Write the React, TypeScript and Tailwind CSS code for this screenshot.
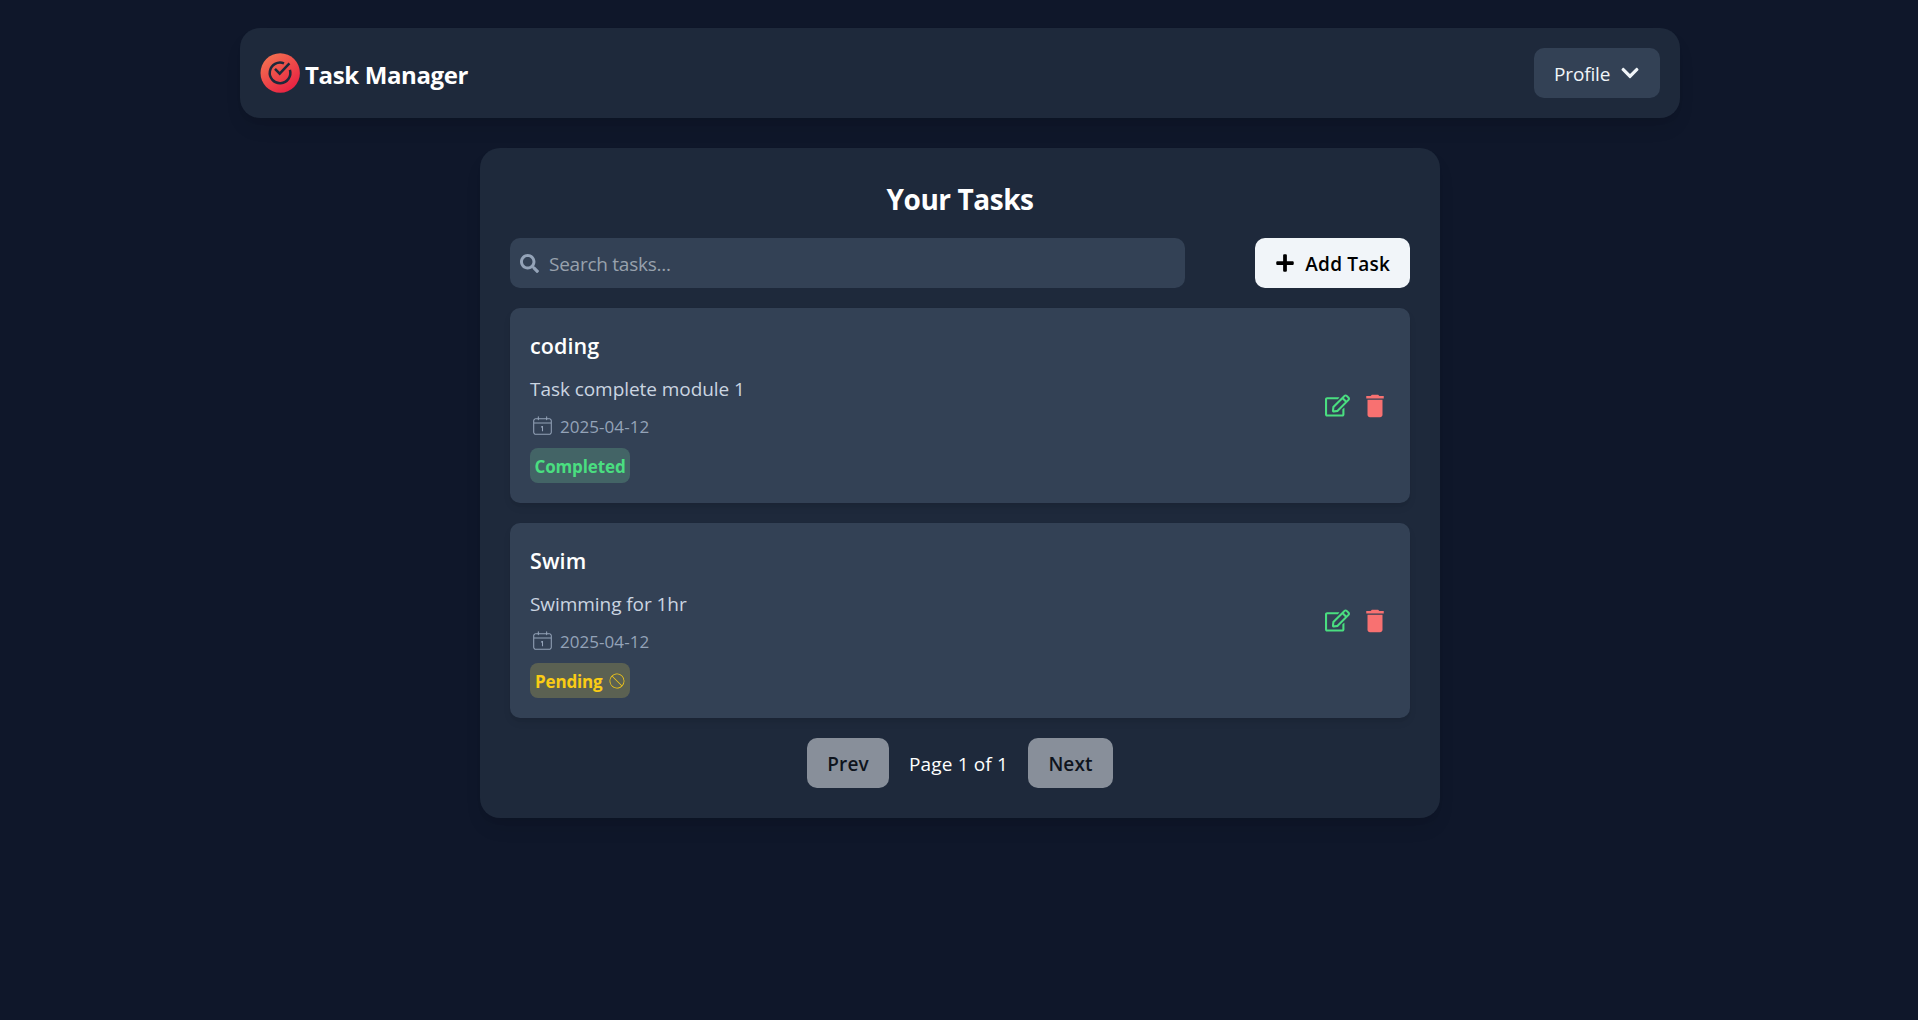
import type { ReactNode } from "react";
import { FaChevronDown, FaPlus, FaRegEdit, FaSearch } from "react-icons/fa";
import { CiCalendarDate, CiNoWaitingSign } from "react-icons/ci";
import { MdDelete } from "react-icons/md";

interface Task {
  title: string;
  description: string;
  date: string;
  completed: boolean;
}

const tasks: Task[] = [
  { title: "coding", description: "Task complete module 1", date: "2025-04-12", completed: true },
  { title: "Swim", description: "Swimming for 1hr", date: "2025-04-12", completed: false },
];

function Logo() {
  return (
    <svg viewBox="0 0 40 40" className="size-10 shrink-0">
      <defs>
        <linearGradient id="logo" x1="0.15" y1="0.1" x2="0.75" y2="0.95">
          <stop offset="0" stopColor="#f36f50" />
          <stop offset="1" stopColor="#e82242" />
        </linearGradient>
      </defs>
      <circle cx="20.2" cy="20" r="19.7" fill="url(#logo)" />
      <g fill="none" stroke="#1e293b" strokeWidth="2.5">
        <path d="M24 10.4A10.3 10.3 0 1 0 29.9 16.9" />
        <path d="M15 15.8l4.7 4.8L29.4 10.4" />
      </g>
    </svg>
  );
}

function Navbar() {
  return (
    <nav className="flex h-[90px] w-[1440px] items-center justify-between rounded-[20px] bg-[#1e293b] px-5 shadow-[0_12px_19px_-4px_rgba(0,0,0,0.1),0_5px_8px_-5px_rgba(0,0,0,0.1)]">
      <div className="flex items-center gap-[5px]">
        <Logo />
        <span className="pt-[3px] text-[24px] leading-[35px] font-bold tracking-[-0.36px]">Task Manager</span>
      </div>
      <button className="flex h-[50px] w-[126px] items-center justify-between rounded-[10px] bg-[#334155] px-5 text-[#f1f5f9]">
        <span className="pt-[2px] text-[19px] leading-[30px] tracking-[-0.15px]">Profile</span>
        <FaChevronDown className="size-5" />
      </button>
    </nav>
  );
}

function PageButton({ children, width }: { children: ReactNode; width: string }) {
  return (
    <button className={`${width} h-[50px] rounded-[10px] bg-[#f1f5f9] pt-[2px] text-[19px] font-semibold tracking-[0.1px] text-black opacity-50`}>
      {children}
    </button>
  );
}

function TaskCard({ task }: { task: Task }) {
  return (
    <li className="flex h-[195px] items-center justify-between rounded-[10px] bg-[#334155] p-5 shadow-[0_5px_8px_-1px_rgba(0,0,0,0.08),0_3px_5px_-3px_rgba(0,0,0,0.08)]">
      <div className="flex h-full flex-col items-start">
        <h3 className="text-[21.5px] leading-[35px] font-semibold tracking-[0.1px]">{task.title}</h3>
        <p className="mt-[11px] text-[19px] leading-[30px] tracking-[-0.06px] text-[#cbd5e1]">{task.description}</p>
        <p className="mt-[9px] flex h-[25px] items-center gap-[5px] text-[#94a3b8]">
          <CiCalendarDate className="size-[25px]" />
          <span className="pt-px text-[17px] leading-[25px] tracking-[0.05px]">{task.date}</span>
        </p>
        {task.completed ? (
          <span className="mt-[10px] flex h-[35px] w-[100px] items-center justify-center rounded-[8px] bg-[#86efac]/20 pt-[2px] text-[17px] font-bold tracking-[-0.12px] text-[#4ade80]">
            Completed
          </span>
        ) : (
          <span className="mt-[10px] flex h-[35px] w-[100px] items-center justify-between rounded-[8px] bg-[#fde047]/20 pr-1 pl-[5px] text-[#facc15]">
            <span className="pt-[2px] text-[17px] font-bold tracking-[-0.15px]">Pending</span>
            <CiNoWaitingSign className="size-[18px]" />
          </span>
        )}
      </div>
      <div className="flex items-center gap-[10px]">
        <button aria-label="Edit task" className="text-[#4ade80]">
          <FaRegEdit className="size-[25px]" />
        </button>
        <button aria-label="Delete task" className="text-[#f87171]">
          <MdDelete className="size-[30px]" />
        </button>
      </div>
    </li>
  );
}

export default function App() {
  return (
    <div className="flex min-h-screen flex-col items-center bg-[#0f172a] pt-7 pl-[2px] font-['Open_Sans',sans-serif] text-white">
      <Navbar />
      <main className="mt-[30px] flex h-[670px] w-[960px] flex-col rounded-[20px] bg-[#1e293b] p-[30px] shadow-[0_12px_19px_-4px_rgba(0,0,0,0.1),0_5px_8px_-5px_rgba(0,0,0,0.1)]">
        <h2 className="pt-px text-center text-[28px] leading-[40px] font-bold tracking-[-0.45px]">Your Tasks</h2>
        <div className="mt-[19px] flex items-center justify-between">
          <label className="flex h-[50px] w-[675px] items-center gap-[9px] rounded-[10px] bg-[#334155] px-[10px]">
            <FaSearch className="size-[19px] text-[#94a3b8]" />
            <input
              placeholder="Search tasks..."
              className="ml-px flex-1 bg-transparent pt-[2px] text-[19px] tracking-[-0.25px] outline-none placeholder:text-[#98a1ad]"
            />
          </label>
          <button className="flex h-[50px] w-[155px] items-center justify-between rounded-[10px] bg-[#f1f5f9] px-5 text-black">
            <FaPlus className="size-5" />
            <span className="pt-[2px] text-[19px] font-semibold tracking-[0.2px]">Add Task</span>
          </button>
        </div>
        <ul className="mt-5 flex flex-col gap-5">
          {tasks.map((task) => (
            <TaskCard key={task.title} task={task} />
          ))}
        </ul>
        <div className="mt-5 flex items-center justify-center gap-5">
          <PageButton width="w-[82px]">Prev</PageButton>
          <span className="w-[99px] pt-[2px] text-center text-[19px] tracking-[0.15px] whitespace-nowrap">Page 1 of 1</span>
          <PageButton width="w-[85px]">Next</PageButton>
        </div>
      </main>
    </div>
  );
}
